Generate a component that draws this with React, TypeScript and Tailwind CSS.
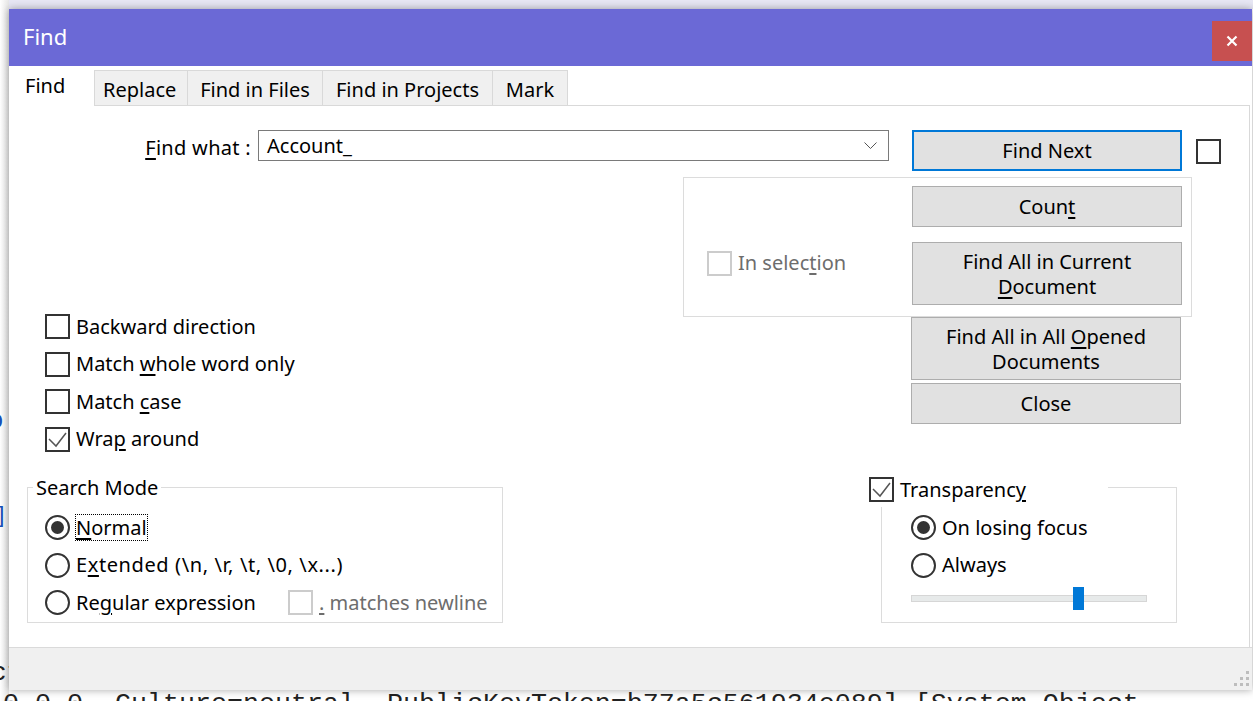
import React from "react";

const ui = "font-['Noto_Sans',sans-serif]";

function Check({ checked = false, disabled = false }: { checked?: boolean; disabled?: boolean }) {
  return (
    <div
      className={`w-[25px] h-[25px] shrink-0 bg-white border-2 ${
        disabled ? "border-[#cccccc]" : "border-[#333333]"
      }`}
    >
      {checked && (
        <svg width="21" height="21" viewBox="0 0 21 21">
          <path d="M2 10 L9 17 L19 4" fill="none" stroke="#555" strokeWidth="1.5" />
        </svg>
      )}
    </div>
  );
}

function Radio({ checked = false }: { checked?: boolean }) {
  return (
    <div className="w-[25px] h-[25px] shrink-0 rounded-full border-2 border-[#333333] bg-white flex items-center justify-center">
      {checked && <div className="w-[13px] h-[13px] rounded-full bg-[#333333]" />}
    </div>
  );
}

function Btn({ h, children }: { h: string; children: React.ReactNode }) {
  return (
    <div
      className={`${h} w-[270px] bg-[#e1e1e1] border border-[#adadad] flex items-center justify-center text-center leading-[25px]`}
    >
      <div>{children}</div>
    </div>
  );
}

function Row({ children }: { children: React.ReactNode }) {
  return <div className="h-[37.5px] flex items-center gap-[6px]">{children}</div>;
}

export default function App() {
  return (
    <div className={`relative w-[1253px] h-[701px] overflow-hidden bg-white text-black ${ui} text-[20px]`}>
      {/* editor behind the dialog */}
      <div className="h-[9px] bg-[#e7e7f4]" />
      <div className="absolute left-0 top-0 w-[9px] h-full bg-gradient-to-r from-white to-[#e6e6e6]" />
      <div className="absolute left-[-12px] top-[402px] font-['Liberation_Mono',monospace] text-[26px] text-[#1a4fb8]">o</div>
      <div className="absolute left-[-6px] top-[500px] font-['Liberation_Mono',monospace] text-[22px] text-[#1a4fb8]">]l</div>
      <div className="absolute left-[-9px] top-[654px] font-['Liberation_Mono',monospace] text-[26px] text-[#222]">ct</div>
      <div className="absolute left-[3px] top-[689px] whitespace-nowrap font-['Liberation_Mono',monospace] text-[26.67px] leading-[30px] text-[#222]">
        0.0.0, Culture=neutral, PublicKeyToken=b77a5c561934e089] [System.Object
      </div>

      {/* dialog window */}
      <div className="absolute left-[9px] top-[9px] w-[1243px] h-[681px] bg-white flex flex-col shadow-[0_0_8px_rgba(0,0,0,0.35)]">
        {/* title bar */}
        <div className="h-[57px] bg-[#6b69d6] flex items-start justify-between">
          <div className="pl-[14px] pt-[12px] text-white text-[22px] leading-[30px]">Find</div>
          <div className="mt-[12px] w-[40px] h-[40px] bg-[#c75050] flex items-center justify-center">
            <svg width="12" height="12" viewBox="0 0 12 12">
              <path d="M1.5 1.5 L10.5 10.5 M10.5 1.5 L1.5 10.5" stroke="white" strokeWidth="2.2" />
            </svg>
          </div>
        </div>

        {/* tabs */}
        <div className="h-[40px] flex items-end text-[20px]">
          <div className="w-[85px] h-[40px] pl-[16px] flex items-center">Find</div>
          <div className="w-[94px] h-[36px] bg-[#f0f0f0] border border-[#d9d9d9] flex items-center pl-[8px] pt-[3px]">Replace</div>
          <div className="w-[135px] h-[36px] bg-[#f0f0f0] border border-l-0 border-[#d9d9d9] flex items-center justify-center pt-[3px]">Find in Files</div>
          <div className="w-[170px] h-[36px] bg-[#f0f0f0] border border-l-0 border-[#d9d9d9] flex items-center justify-center pt-[3px]">Find in Projects</div>
          <div className="w-[75px] h-[36px] bg-[#f0f0f0] border border-l-0 border-[#d9d9d9] flex items-center justify-center pt-[3px]">Mark</div>
          <div className="flex-1 mr-[2px] border-b border-r border-[#d9d9d9] h-[1px]" />
        </div>

        {/* panel */}
        <div className="flex-1 flex flex-col mr-[2px] border-r border-[#d9d9d9] leading-[28px]">
          <div className="flex items-start mt-[24px]">
            <div className="w-[249px] text-right pr-[7px] mt-[4px] tracking-[0.3px]">
              <u className="underline-offset-[3px]">F</u>ind what :
            </div>
            <div className="w-[631px] h-[31px] border border-[#7a7a7a] flex items-center justify-between pl-[8px] pr-[11px]">
              <span>Account_</span>
              <svg width="13" height="8" viewBox="0 0 13 8">
                <path d="M0.5 0.5 L6.5 6.5 L12.5 0.5" fill="none" stroke="#555" strokeWidth="1" />
              </svg>
            </div>
            <div className="ml-[23px] w-[270px] h-[41px] border-2 border-[#0078d7] bg-[#e1e1e1] flex items-center justify-center">
              Find Next
            </div>
            <div className="ml-[14px] mt-[9px]">
              <Check />
            </div>
          </div>

          <div className="flex mt-[6px]">
            <div className="w-[674px] pl-[36px] pt-[131px] flex flex-col">
              <Row>
                <Check />
                <span>Backward direction</span>
              </Row>
              <Row>
                <Check />
                <span>
                  Match <u className="underline-offset-[3px]">w</u>hole word only
                </span>
              </Row>
              <Row>
                <Check />
                <span>
                  Match <u className="underline-offset-[3px]">c</u>ase
                </span>
              </Row>
              <Row>
                <Check checked />
                <span>
                  Wra<u className="underline-offset-[3px]">p</u> around
                </span>
              </Row>
            </div>
            <div className="flex flex-col">
              <div className="w-[509px] h-[140px] border border-[#dcdcdc] flex">
                <div className="w-[228px] pl-[23px] pt-[71px]">
                  <div className="flex items-center gap-[6px] text-[#6d6d6d]">
                    <Check disabled />
                    <span>
                      In selec<u className="underline-offset-[3px]">t</u>ion
                    </span>
                  </div>
                </div>
                <div className="pt-[8px] flex flex-col gap-[15px]">
                  <Btn h="h-[41px]">
                    Coun<u className="underline-offset-[3px]">t</u>
                  </Btn>
                  <Btn h="h-[63px]">
                    Find All in Current
                    <br />
                    <u className="underline-offset-[3px]">D</u>ocument
                  </Btn>
                </div>
              </div>
              <div className="ml-[228px] flex flex-col gap-[3px]">
                <Btn h="h-[63px]">
                  Find All in All <u className="underline-offset-[3px]">O</u>pened
                  <br />
                  Documents
                </Btn>
                <Btn h="h-[41px]">Close</Btn>
              </div>
            </div>
          </div>

          <div className="flex items-start mt-[29px]">
            <div className="relative ml-[18px] w-[476px] h-[136px] border border-[#dcdcdc]">
              <div className="absolute left-[5px] top-[-14px] px-[3px] bg-white">Search Mode</div>
              <div className="pl-[17px] pt-[21px] flex flex-col">
                <Row>
                  <Radio checked />
                  <span className="border border-dotted border-black leading-[25px] ml-[-1px]">
                    <u className="underline-offset-[3px]">N</u>ormal
                  </span>
                </Row>
                <Row>
                  <Radio />
                  <span className="tracking-[0.6px]">
                    E<u className="underline-offset-[3px]">x</u>tended (\n, \r, \t, \0, \x...)
                  </span>
                </Row>
                <div className="h-[37.5px] flex items-center">
                  <div className="w-[243px] flex items-center gap-[6px]">
                    <Radio />
                    <span>
                      Re<u className="underline-offset-[3px]">g</u>ular expression
                    </span>
                  </div>
                  <div className="flex items-center gap-[6px] text-[#6d6d6d]">
                    <Check disabled />
                    <span>
                      <u className="underline-offset-[3px]">.</u> matches newline
                    </span>
                  </div>
                </div>
              </div>
            </div>

            <div className="relative ml-[378px] w-[296px] h-[136px] border border-[#dcdcdc]">
              <div className="absolute left-[-13px] top-[-11px] w-[239px] h-[30px] bg-white flex items-start gap-[6px]">
                <Check checked />
                <span className="leading-[26px]">
                  Transparenc<u className="underline-offset-[3px]">y</u>
                </span>
              </div>
              <div className="pl-[29px] pt-[21px] flex flex-col">
                <Row>
                  <Radio checked />
                  <span>On losing focus</span>
                </Row>
                <Row>
                  <Radio />
                  <span>Always</span>
                </Row>
                <div className="mt-[11px] relative w-[236px] h-[7px] bg-[#e7eaea] border border-[#d6d6d6]">
                  <div className="absolute left-[161px] top-[-9px] w-[11px] h-[23px] bg-[#0078d7]" />
                </div>
              </div>
            </div>
          </div>
        </div>

        {/* status strip with grip */}
        <div className="h-[43px] bg-[#f0f0f0] border-t border-[#dadada] flex items-end justify-end pr-[2px] pb-[3px]">
          <svg width="17" height="17" viewBox="0 0 17 17">
            <rect x="13" y="1" width="3" height="3" fill="#bdbdbd" />
            <rect x="7" y="7" width="3" height="3" fill="#bdbdbd" />
            <rect x="13" y="7" width="3" height="3" fill="#bdbdbd" />
            <rect x="1" y="13" width="3" height="3" fill="#bdbdbd" />
            <rect x="7" y="13" width="3" height="3" fill="#bdbdbd" />
            <rect x="13" y="13" width="3" height="3" fill="#bdbdbd" />
          </svg>
        </div>
      </div>
    </div>
  );
}
